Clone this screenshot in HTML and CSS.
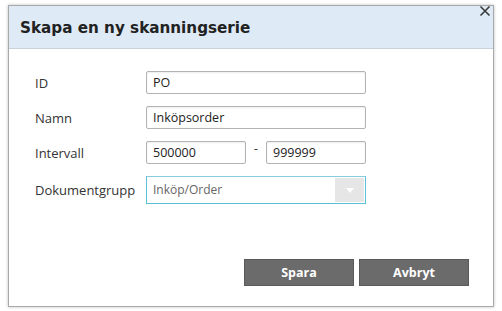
FILE: index.html
```html
<!DOCTYPE html>
<html lang="sv">
<head>
<meta charset="utf-8">
<title>Skapa en ny skanningserie</title>
<link rel="stylesheet" href="styles.css">
</head>
<body>
<div class="dialog">
  <div class="dialog-header">
    <h1 class="dialog-title">Skapa en ny skanningserie</h1>
  </div>
  <span class="close" aria-label="Stäng">
    <svg viewBox="0 0 12 12" width="12" height="12"><path d="M1.5 1.5 L10.5 10.5 M10.5 1.5 L1.5 10.5" stroke="#3a3a3a" stroke-width="1.6" fill="none"/></svg>
  </span>
  <div class="dialog-body">
    <div class="form">
      <label class="label">ID</label>
      <div class="field"><input class="input" value="PO"></div>
      <label class="label">Namn</label>
      <div class="field"><input class="input" value="Inköpsorder"></div>
      <label class="label">Intervall</label>
      <div class="field range">
        <input class="input short" value="500000">
        <span class="dash">-</span>
        <input class="input short" value="999999">
      </div>
      <label class="label">Dokumentgrupp</label>
      <div class="field">
        <div class="select">
          <span class="select-text">Inköp/Order</span>
          <span class="select-arrow"><svg viewBox="0 0 8 5" width="8" height="5"><path d="M0 0 H8 L4 5 Z" fill="#fff"/></svg></span>
        </div>
      </div>
    </div>
  </div>
  <div class="dialog-footer">
    <button class="btn">Spara</button>
    <button class="btn">Avbryt</button>
  </div>
</div>
</body>
</html>
```
FILE: styles.css
```css
html, body {
  margin: 0;
  padding: 0;
  background: #fff;
}
body {
  padding: 5px 8px;
  font-family: "Open Sans", "Noto Sans", sans-serif;
}
.dialog {
  position: relative;
  width: 484px;
  height: 300px;
  border: 1px solid #a9a9a9;
  box-shadow: 0 0 3px rgba(0,0,0,0.25);
  display: flex;
  flex-direction: column;
  background: #fff;
}
.dialog-header {
  height: 42px;
  background: #deeaf6;
  border-bottom: 1px solid #c8d2dc;
  display: flex;
  align-items: center;
  padding-left: 11px;
}
.dialog-title {
  margin: 0;
  font-family: "DejaVu Sans", Verdana, sans-serif;
  font-weight: bold;
  font-size: 15.2px;
  color: #222;
  padding-top: 1px;
}
.close {
  position: absolute;
  top: -1px;
  right: 2px;
  width: 12px;
  height: 12px;
  display: flex;
}
.dialog-body {
  flex: 1;
  padding: 22px 0 0 26px;
}
.form {
  display: grid;
  grid-template-columns: 111px 220px;
  row-gap: 12px;
  align-items: center;
}
.label {
  font-size: 13px;
  color: #333;
}
.field {
  display: flex;
  align-items: center;
}
.input {
  box-sizing: border-box;
  width: 220px;
  height: 23px;
  border: 1px solid #b4b4b4;
  border-radius: 2px;
  box-shadow: inset 0 1px 2px rgba(0,0,0,0.08);
  padding: 0 6px;
  font-family: "Open Sans", "Noto Sans", sans-serif;
  font-size: 12.5px;
  color: #222;
  background: #fff;
}
.range {
  justify-content: space-between;
}
.input.short {
  width: 100px;
}
.dash {
  font-size: 12px;
  color: #333;
  margin-top: -8px;
}
.select {
  box-sizing: border-box;
  width: 220px;
  height: 28px;
  border: 1px solid #5cbfd5;
  border-top-color: #86cde0;
  display: flex;
  align-items: stretch;
}
.select-text {
  flex: 1;
  display: flex;
  align-items: center;
  padding-left: 6px;
  padding-bottom: 2px;
  font-size: 12px;
  color: #666;
}
.select-arrow {
  width: 29px;
  background: #e6e6e6;
  display: flex;
  align-items: center;
  justify-content: center;
  margin: 1px 1px 1px 0;
}
.dialog-footer {
  display: flex;
  justify-content: flex-end;
  gap: 5px;
  padding: 0 24px 20px 0;
}
.btn {
  width: 110px;
  height: 27px;
  background: #6b6b6b;
  border: 1px solid #5a5a5a;
  color: #fff;
  font-family: "Open Sans", "Noto Sans", sans-serif;
  font-weight: bold;
  font-size: 12.5px;
  padding: 0;
}
```
